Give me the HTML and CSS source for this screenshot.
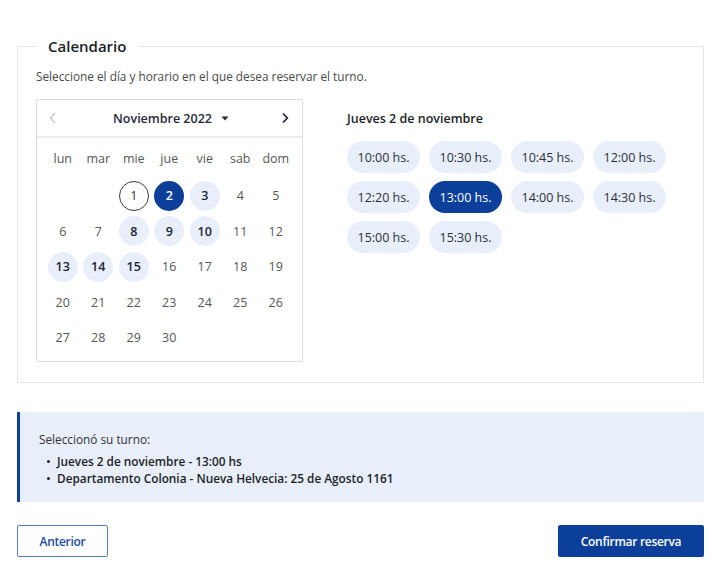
FILE: index.html
```html
<!DOCTYPE html>
<html lang="es">
<head>
<meta charset="utf-8">
<title>Calendario</title>
<link rel="stylesheet" href="styles.css">
</head>
<body>
<main class="page">
  <fieldset class="panel">
    <legend class="panel-title">Calendario</legend>
    <p class="hint">Seleccione el día y horario en el que desea reservar el turno.</p>
    <div class="picker">
      <div class="cal">
        <div class="cal-head">
          <button class="nav nav-prev" aria-label="Anterior">
            <svg width="8" height="12" viewBox="0 0 8 12"><path d="M6 1 1.5 6 6 11" fill="none" stroke="#c4c4c4" stroke-width="1.2"/></svg>
          </button>
          <div class="month">Noviembre 2022
            <svg class="caret" width="8" height="5" viewBox="0 0 8 5"><path d="M0.5 0.5h7L4 4.5z" fill="#1f2a3d"/></svg>
          </div>
          <button class="nav nav-next" aria-label="Siguiente">
            <svg width="8" height="12" viewBox="0 0 8 12"><path d="M2 1.5 6.3 6 2 10.5" fill="none" stroke="#1f2a3d" stroke-width="1.8"/></svg>
          </button>
        </div>
        <div class="cal-grid">
          <span class="wd">lun</span><span class="wd">mar</span><span class="wd">mie</span><span class="wd">jue</span><span class="wd">vie</span><span class="wd">sab</span><span class="wd">dom</span>
          <span class="d"></span><span class="d"></span>
          <span class="d"><b class="n today">1</b></span>
          <span class="d"><b class="n sel">2</b></span>
          <span class="d"><b class="n av">3</b></span>
          <span class="d"><b class="n">4</b></span>
          <span class="d"><b class="n">5</b></span>
          <span class="d"><b class="n">6</b></span>
          <span class="d"><b class="n">7</b></span>
          <span class="d"><b class="n av">8</b></span>
          <span class="d"><b class="n av">9</b></span>
          <span class="d"><b class="n av">10</b></span>
          <span class="d"><b class="n">11</b></span>
          <span class="d"><b class="n">12</b></span>
          <span class="d"><b class="n av">13</b></span>
          <span class="d"><b class="n av">14</b></span>
          <span class="d"><b class="n av">15</b></span>
          <span class="d"><b class="n">16</b></span>
          <span class="d"><b class="n">17</b></span>
          <span class="d"><b class="n">18</b></span>
          <span class="d"><b class="n">19</b></span>
          <span class="d"><b class="n">20</b></span>
          <span class="d"><b class="n">21</b></span>
          <span class="d"><b class="n">22</b></span>
          <span class="d"><b class="n">23</b></span>
          <span class="d"><b class="n">24</b></span>
          <span class="d"><b class="n">25</b></span>
          <span class="d"><b class="n">26</b></span>
          <span class="d"><b class="n">27</b></span>
          <span class="d"><b class="n">28</b></span>
          <span class="d"><b class="n">29</b></span>
          <span class="d"><b class="n">30</b></span>
        </div>
      </div>
      <div class="times">
        <h3 class="times-title">Jueves 2 de noviembre</h3>
        <div class="slots">
          <button class="slot">10:00 hs.</button>
          <button class="slot">10:30 hs.</button>
          <button class="slot">10:45 hs.</button>
          <button class="slot">12:00 hs.</button>
          <button class="slot">12:20 hs.</button>
          <button class="slot slot-sel">13:00 hs.</button>
          <button class="slot">14:00 hs.</button>
          <button class="slot">14:30 hs.</button>
          <button class="slot">15:00 hs.</button>
          <button class="slot">15:30 hs.</button>
        </div>
      </div>
    </div>
  </fieldset>

  <section class="summary">
    <p class="summary-title">Seleccionó su turno:</p>
    <ul class="summary-list">
      <li>Jueves 2 de noviembre - 13:00 hs</li>
      <li>Departamento Colonia - Nueva Helvecia: 25 de Agosto 1161</li>
    </ul>
  </section>

  <div class="actions">
    <button class="btn btn-outline">Anterior</button>
    <button class="btn btn-primary">Confirmar reserva</button>
  </div>
</main>
</body>
</html>
```

FILE: styles.css
```css
* { box-sizing: border-box; }

body {
  margin: 0;
  background: #fff;
  font-family: "Open Sans", "Noto Sans", sans-serif;
  color: #333;
}

.page {
  padding: 36px 18px 0 17px;
}

.panel {
  margin: 0;
  border: 1px solid #e6e6e6;
  padding: 0 18px 20px;
  min-width: 0;
}

.panel-title {
  padding: 0 12px;
  font-size: 15px;
  line-height: 20px;
  font-weight: 600;
  color: #1b1f27;
}

.hint {
  margin: 12px 0 15px;
  font-size: 11.8px;
  line-height: 16px;
  color: #4a4a4a;
}

.picker {
  display: flex;
  gap: 44px;
  align-items: flex-start;
}

.cal {
  width: 267px;
  height: 263px;
  border: 1px solid #dedede;
  border-radius: 2px;
}

.cal-head {
  height: 38px;
  border-bottom: 2px solid #ececec;
  display: flex;
  align-items: center;
  justify-content: space-between;
  padding: 0 12px;
}

.nav {
  border: 0;
  background: none;
  padding: 0;
  width: 8px;
  height: 12px;
  display: flex;
}
.nav-next { margin-right: 1px; }

.month {
  display: flex;
  align-items: center;
  gap: 9px;
  font-size: 12.5px;
  font-weight: 600;
  color: #1f2a3d;
  margin-left: 4px;
}

.cal-grid {
  display: grid;
  grid-template-columns: repeat(7, 35.5px);
  grid-template-rows: 40px repeat(5, 35.5px);
  padding: 0 8px;
}

.wd, .d {
  display: flex;
  align-items: center;
  justify-content: center;
  font-size: 12.5px;
  color: #575757;
}

.n {
  width: 30px;
  height: 30px;
  border-radius: 50%;
  display: flex;
  align-items: center;
  justify-content: center;
  font-weight: 400;
  font-size: 12.5px;
  color: #575757;
}

.n.today {
  border: 1px solid #3a3a3a;
  color: #333;
}

.n.sel {
  background: #0b3f9a;
  color: #fff;
  font-weight: 600;
}

.n.av {
  background: #e8effb;
  color: #1b2438;
  font-weight: 600;
}

.times {
  padding-top: 11px;
}

.times-title {
  margin: 0 0 13px;
  font-size: 12.5px;
  line-height: 18px;
  font-weight: 600;
  color: #1b1f27;
}

.slots {
  display: grid;
  grid-template-columns: repeat(4, 73px);
  gap: 8px 9px;
}

.slot {
  height: 32px;
  border: 0;
  border-radius: 16px;
  background: #e8effb;
  font-family: inherit;
  font-size: 12.5px;
  color: #2a2f3a;
  padding: 0;
}

.slot-sel {
  background: #0b3f9a;
  color: #fff;
}

.summary {
  margin-top: 29px;
  height: 90px;
  background: #e8eefa;
  border-left: 3px solid #0b3f9a;
  padding: 19px 19px 0;
}

.summary-title {
  margin: 0 0 5px;
  font-size: 11.8px;
  line-height: 17px;
  color: #333;
}

.summary-list {
  margin: 0;
  padding: 0 0 0 18px;
  list-style: none;
}

.summary-list li {
  position: relative;
  font-size: 11.8px;
  line-height: 17px;
  font-weight: 600;
  color: #1b1f27;
}

.summary-list li::before {
  content: "";
  position: absolute;
  left: -10px;
  top: 7px;
  width: 3px;
  height: 3px;
  border-radius: 50%;
  background: #1b1f27;
}

.actions {
  margin-top: 23px;
  display: flex;
  justify-content: space-between;
}

.btn {
  height: 32px;
  border-radius: 2px;
  font-family: inherit;
  font-size: 12px;
  letter-spacing: -0.3px;
  font-weight: 600;
  padding: 0;
}

.btn-outline {
  width: 91px;
  background: #fff;
  border: 1px solid #5a7cc8;
  color: #1d4ba6;
}

.btn-primary {
  width: 146px;
  background: #0b3f9a;
  border: 0;
  color: #fff;
}
```
